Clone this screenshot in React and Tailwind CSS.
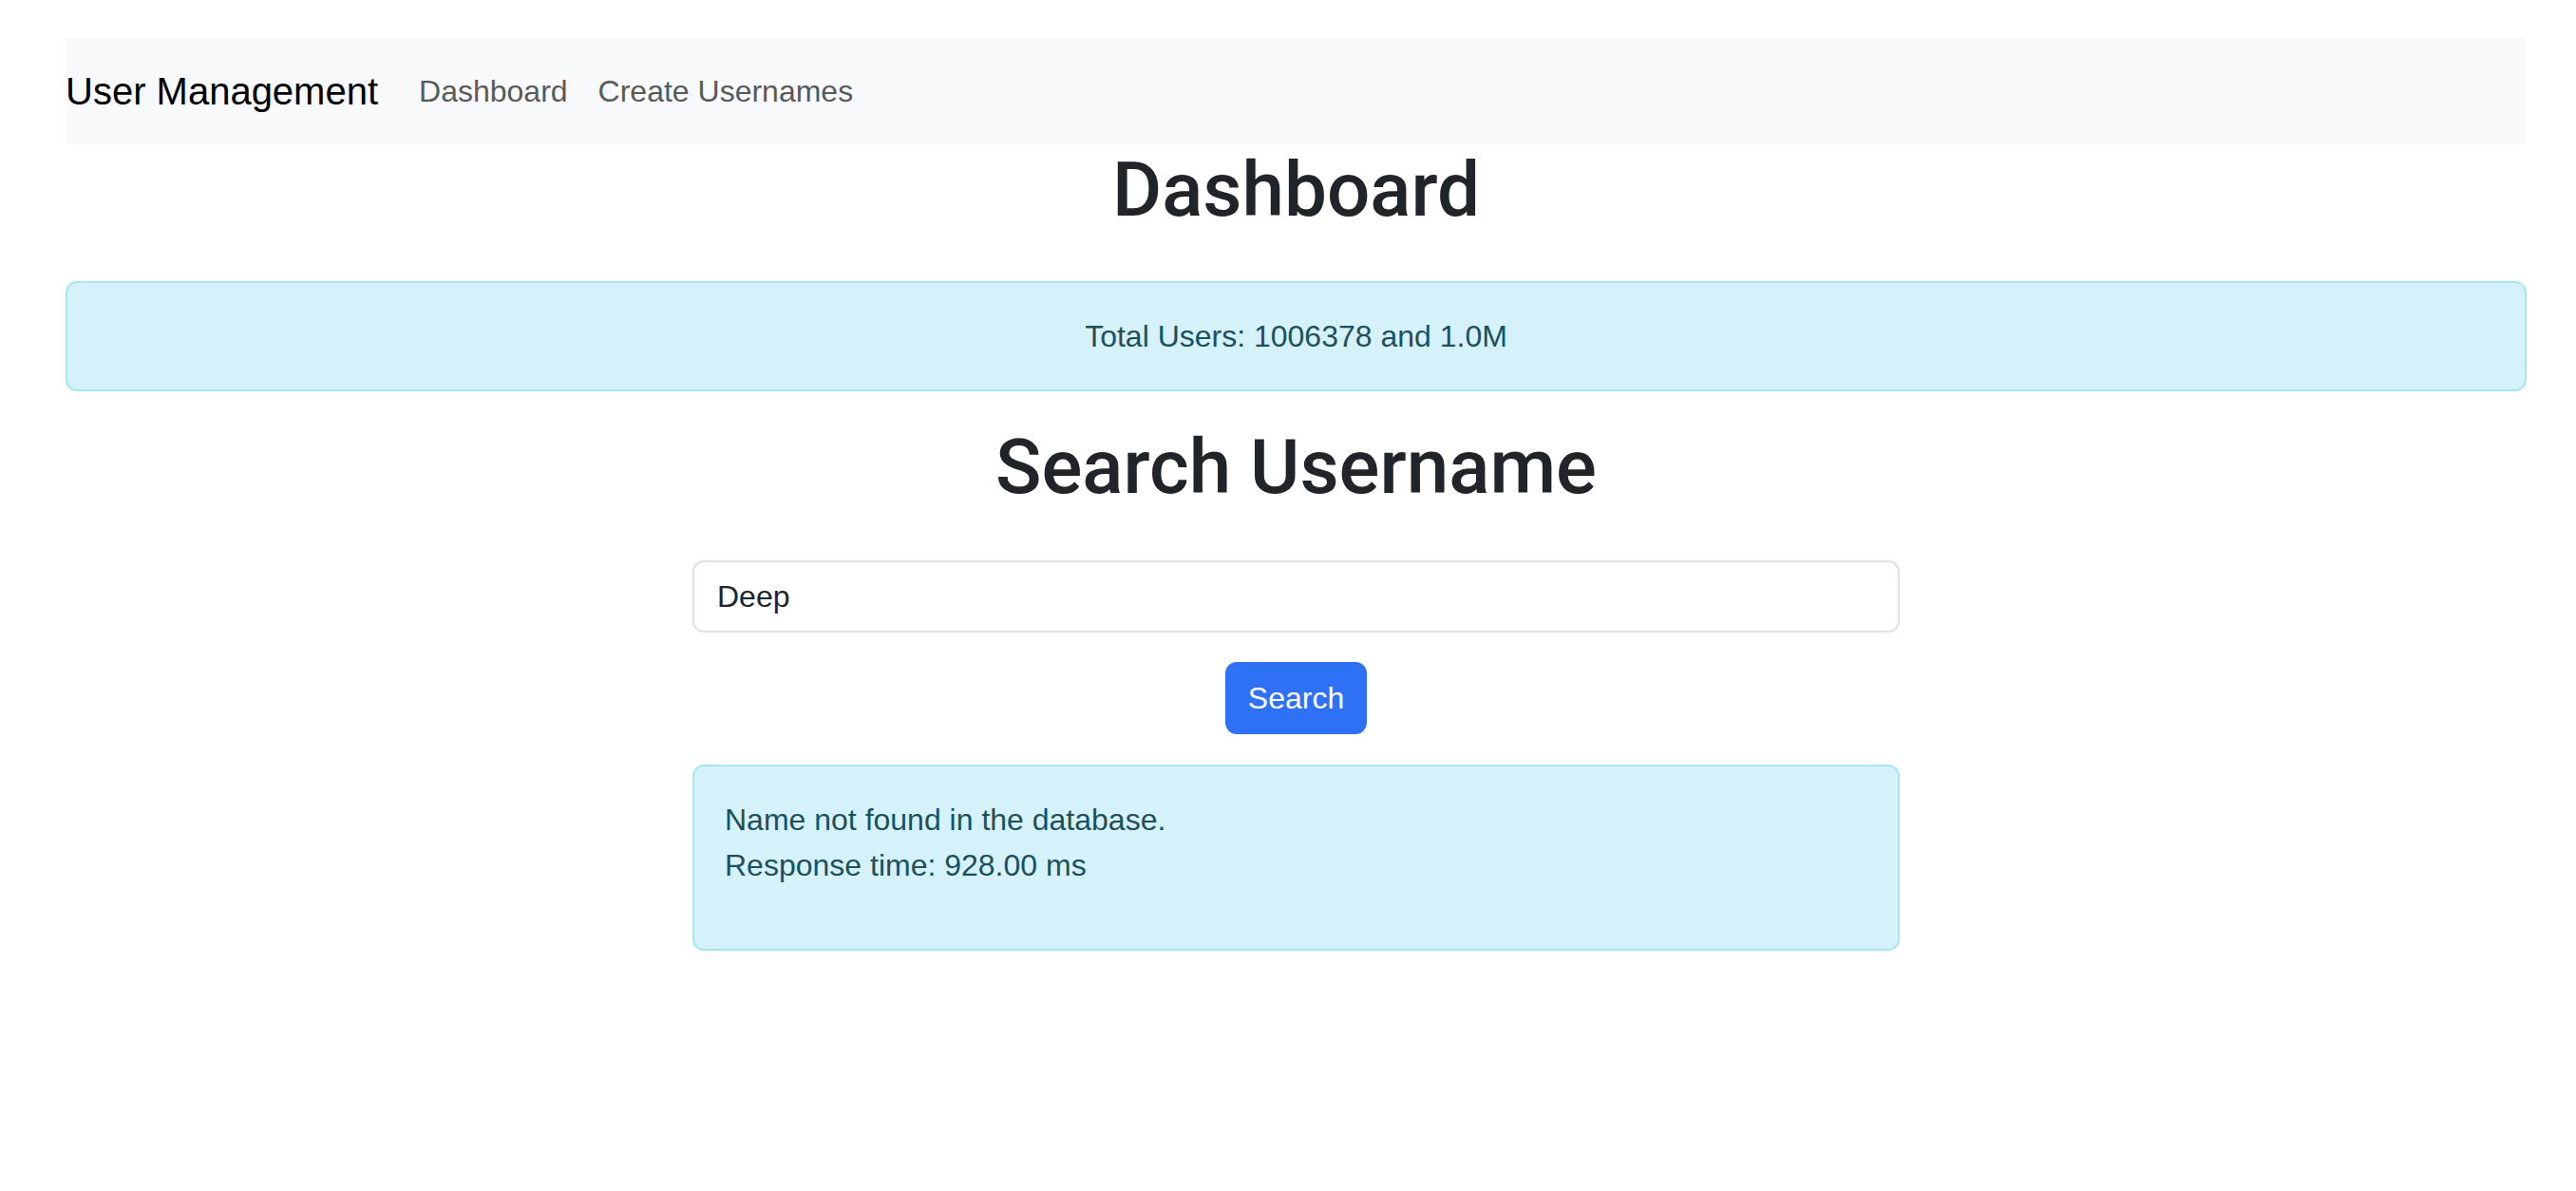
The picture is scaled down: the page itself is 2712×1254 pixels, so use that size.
import { useState } from "react";

export default function App() {
  const [query, setQuery] = useState("Deep");

  return (
    <div className="min-h-screen bg-white font-['Liberation_Sans',Arial,sans-serif] text-[#212529]">
      <div className="pt-[40px] pl-[69px] w-[2660px]">
        {/* NAVBAR */}
        <nav className="flex items-center h-[112px] bg-[#f8f9fa]">
          <span className="text-[40px] leading-[60px] text-black mr-[43px]">User Management</span>
          <a className="text-[32px] leading-[48px] text-[#595959] px-[16px] -ml-[16px]">Dashboard</a>
          <a className="text-[32px] leading-[48px] text-[#595959] px-[16px]">Create Usernames</a>
        </nav>

        <h1 className="text-center font-['Roboto',sans-serif] text-[80px] leading-[96px] font-medium text-[#212529]">Dashboard</h1>

        {/* Total users */}
        <div className="mt-[48px] border-2 border-[#a8e6f5] bg-[#d5f2fa] rounded-[12px] p-[32px] text-center text-[32px] leading-[48px] text-[#1d4f5c]">
          Total Users: 1006378 and 1.0M
        </div>

        <h1 className="mt-[32px] text-center font-['Roboto',sans-serif] text-[80px] leading-[96px] font-medium text-[#212529]">Search Username</h1>

        <div className="mt-[50px] mx-auto w-[1271px] flex flex-col items-center">
          <input
            value={query}
            onChange={(e) => setQuery(e.target.value)}
            className="w-full h-[76px] border-2 border-[#dee2e6] rounded-[12px] px-[24px] text-[32px] text-[#212529] outline-none"
          />
          <button className="mt-[31px] h-[76px] px-[24px] bg-[#2f71f5] text-white text-[32px] rounded-[12px]">
            Search
          </button>

          <div className="mt-[32px] w-full border-2 border-[#a8e6f5] bg-[#d5f2fa] rounded-[12px] p-[32px] text-[32px] leading-[48px] text-[#1d4f5c]">
            <div>Name not found in the database.</div>
            <p className="mb-[32px]">Response time: 928.00 ms</p>
          </div>
        </div>
      </div>
    </div>
  );
}
